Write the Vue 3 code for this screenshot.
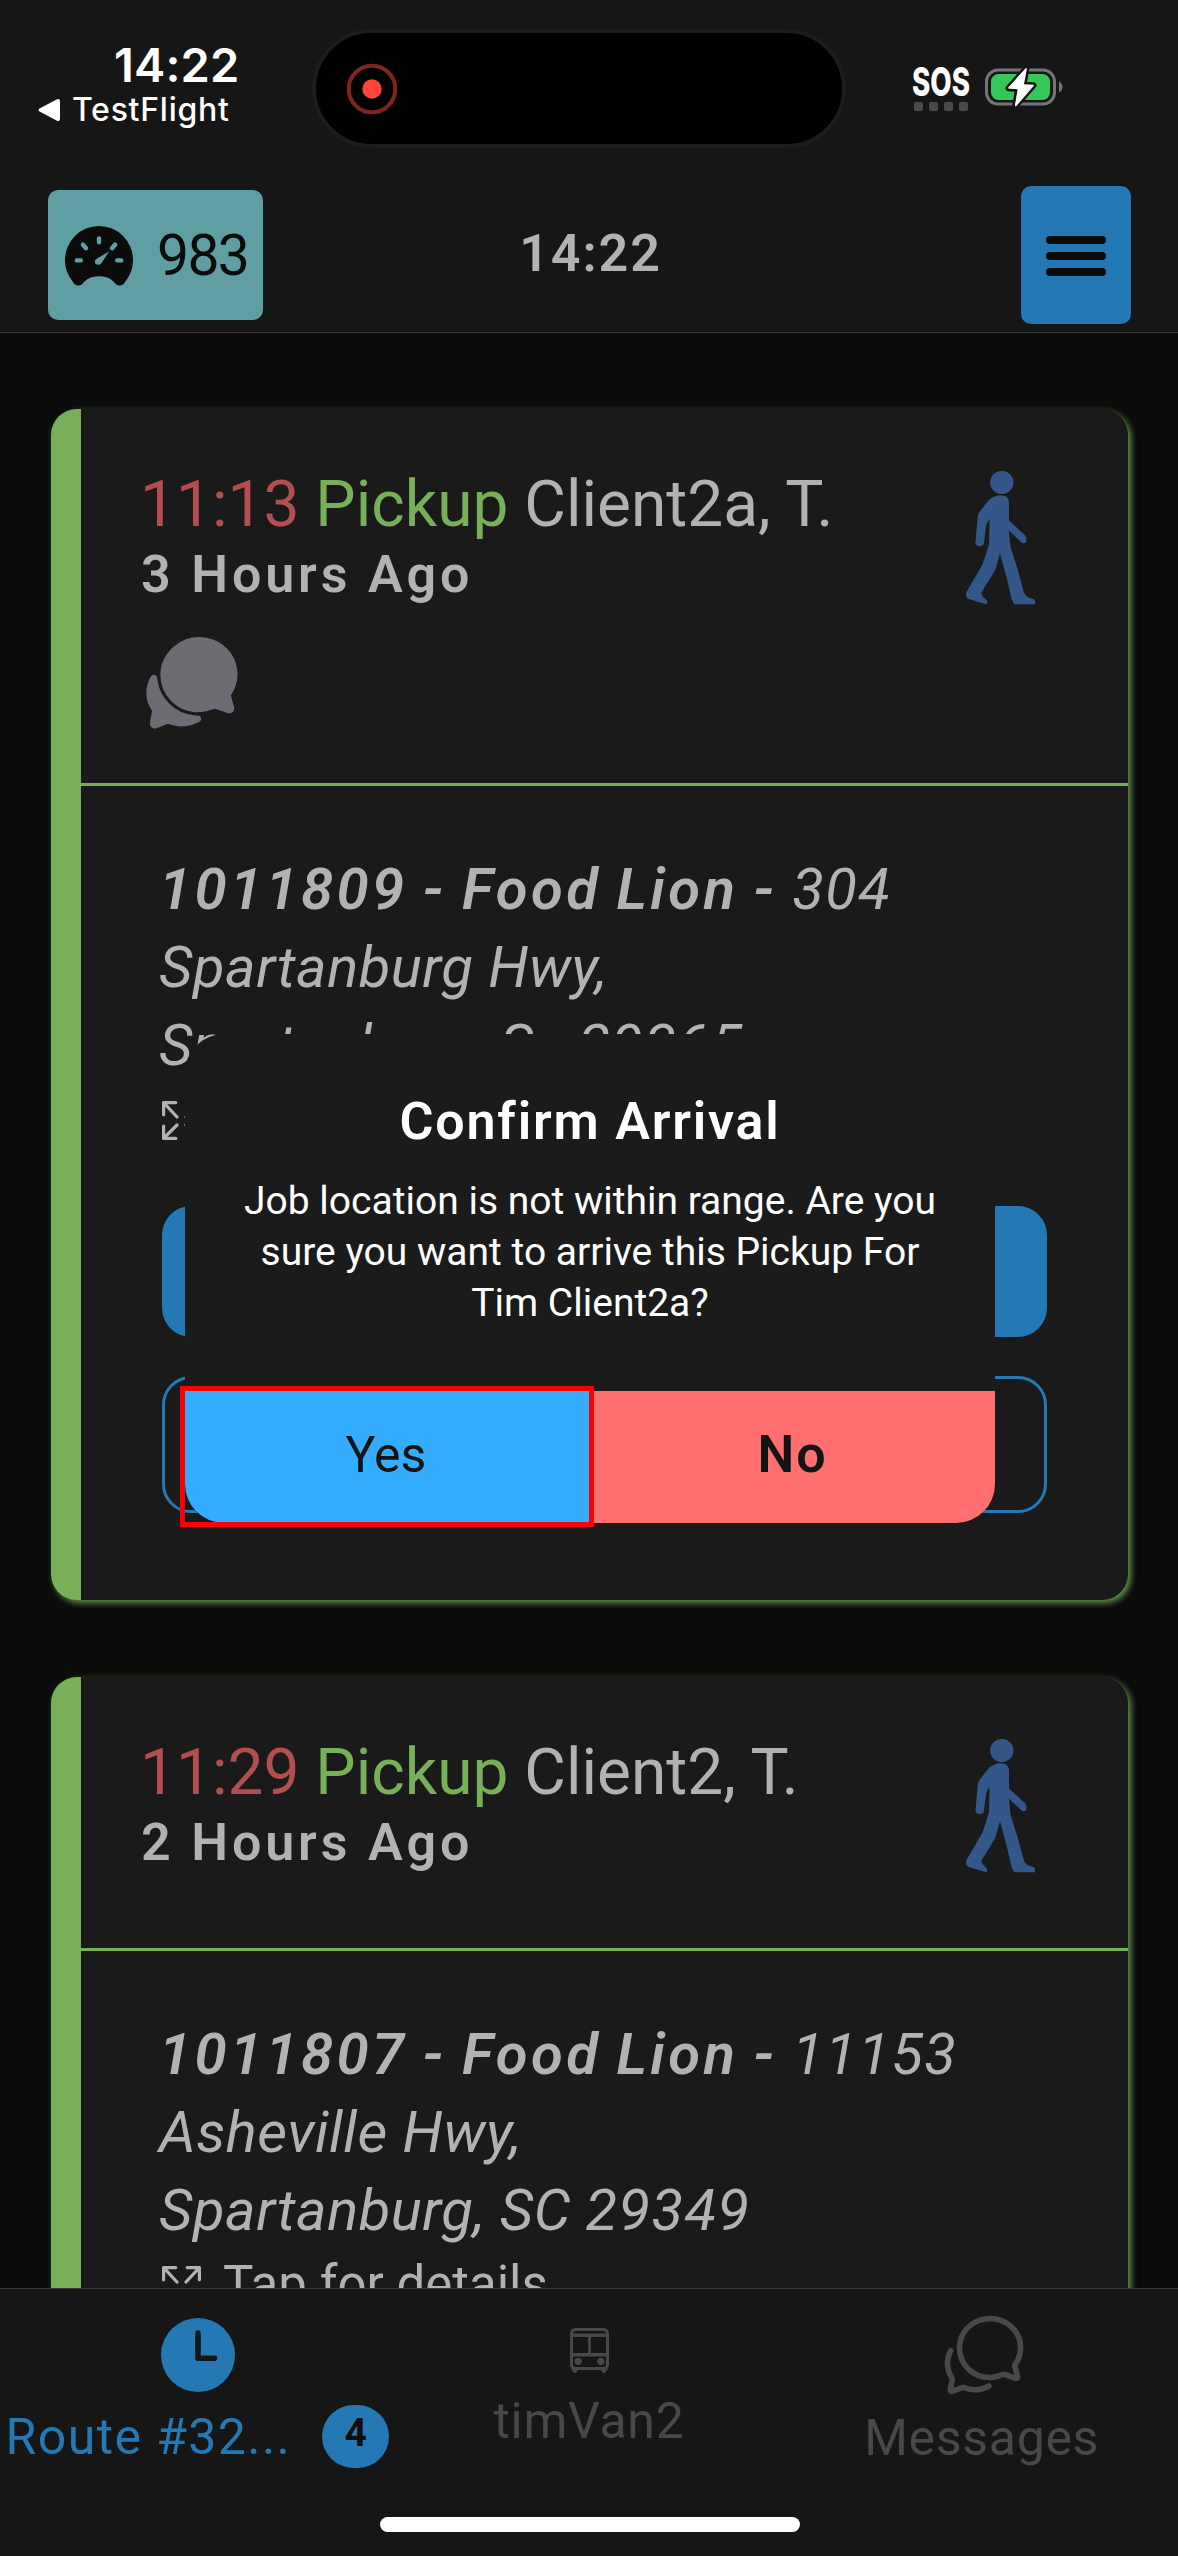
<script setup>
const jobs = [
  {
    time: '11:13',
    client: 'Client2a, T.',
    ago: '3 Hours Ago',
    site: '1011809 - Food Lion -',
    number: '304',
    street: 'Spartanburg Hwy,',
    city: 'Spartanburg, Sc',
    zip: '29365',
    hasMessages: true,
  },
  {
    time: '11:29',
    client: 'Client2, T.',
    ago: '2 Hours Ago',
    site: '1011807 - Food Lion -',
    number: '11153',
    street: 'Asheville Hwy,',
    city: 'Spartanburg, SC',
    zip: '29349',
    hasMessages: false,
  },
]
</script>

<template>
  <div class="screen">
    <header class="top">
      <div class="status">
        <div class="status-left">
          <div class="clock">14:22</div>
          <div class="back">
            <svg width="22" height="24" viewBox="0 0 22 24">
              <path d="M2 10.2 18.6 1.4Q22 0 22 3.2V20.8Q22 24 18.6 22.4L2 13.8Q-1 12 2 10.2Z" fill="#fff" />
            </svg>
            <span>TestFlight</span>
          </div>
        </div>
        <div class="island">
          <svg width="52" height="52" viewBox="0 0 52 52">
            <circle cx="26" cy="26" r="23.3" fill="none" stroke="#7f241f" stroke-width="4" />
            <circle cx="26" cy="26" r="9.7" fill="#ff453a" />
          </svg>
        </div>
        <div class="status-right">
          <div class="signal">
            <svg class="sos-box" width="60" height="30" viewBox="0 0 60 30">
              <text x="1" y="29" textLength="58" lengthAdjust="spacingAndGlyphs" class="sos">SOS</text>
            </svg>
            <div class="dots"><i></i><i></i><i></i><i></i></div>
          </div>
          <svg width="79" height="40" viewBox="0 0 79 40">
            <rect x="1.5" y="3" width="68" height="34" rx="11.5" fill="none" stroke="#767478" stroke-width="3" />
            <path d="M74 14.5Q77.5 16.5 77.5 20T74 25.5Z" fill="#767478" />
            <rect x="6" y="7" width="59" height="26" rx="7.5" fill="#34c759" />
            <path d="M41.5 1 23.5 21.3 33 22 30 39.5 48.5 18.3 38.5 17.6Z" fill="#fff" stroke="#161616" stroke-width="6" stroke-linejoin="round" paint-order="stroke" />
            <path d="M41 2 24 20.8 33.6 21.6 30.8 38.5 48 18.6 38 18Z" fill="#fff" stroke="#fff" stroke-width="1.6" stroke-linejoin="round" />
          </svg>
        </div>
      </div>
      <nav class="nav">
        <button class="odometer">
          <svg width="68" height="60" viewBox="0 0 68 60">
            <path d="M13.5 59.5C11 59.5 8.8 58 7.3 55A34 33.5 0 0 1 0 34A34 34 0 0 1 68 34A34 33.5 0 0 1 60.7 55C59.2 58 57 59.5 54.5 59.5C52 59.5 50.5 58 49 56C45 52 40 50.3 34 50.3S23 52 19 56C17.5 58 16 59.5 13.5 59.5Z" fill="#0b0b0b" />
            <path d="M11.8 34.4H15.8M34 12.5V16.2M18 18.7 21 22.2M50 18.7 47 22.2M52.2 34.4H56.2" stroke="#5f9ea3" stroke-width="4.4" stroke-linecap="round" />
            <path d="M44.2 25.2 31 33.2C28.5 36 30.5 39.3 33.8 38.8C35.3 38.6 36.2 37.8 37 36.3Z" fill="#5f9ea3" />
          </svg>
          <span>983</span>
        </button>
        <div class="nav-title">14:22</div>
        <button class="menu"><i></i><i></i><i></i></button>
      </nav>
    </header>

    <main class="list">
      <article v-for="job in jobs" :key="job.time" class="card">
        <div class="card-head" :class="{ tall: job.hasMessages }">
          <div>
            <h2><span class="due">{{ job.time }}</span> <span class="kind">Pickup</span> {{ job.client }}</h2>
            <h3>{{ job.ago }}</h3>
            <svg v-if="job.hasMessages" class="chat" width="104" height="104" viewBox="0 0 512 512" fill="#6c6d73">
              <path d="M439.9 405.6a26.77 26.77 0 01-9.59-2l-56.78-20.13-.42-.17a9.88 9.88 0 00-3.91-.76 10.32 10.32 0 00-3.62.66c-1.38.52-13.81 5.19-26.85 8.77-7.07 1.94-31.68 8.27-51.43 8.27-50.48 0-97.68-19.4-132.89-54.63A183.38 183.38 0 01100.3 215.1a175.9 175.9 0 014.06-37.58c8.79-40.62 32.07-77.57 65.55-104A194.76 194.76 0 01290.3 30c52.21 0 100.86 20 137 56.18 34.16 34.27 52.88 79.33 52.73 126.87a177.86 177.86 0 01-30.3 99.15l-.19.28-.74 1c-.17.23-.34.45-.5.68l-.15.27a21.63 21.63 0 00-1.08 2.09l15.74 55.94a26.42 26.42 0 011.12 7.11 24 24 0 01-24.03 26.03z" />
              <path d="M299.87 425.39a15.74 15.74 0 00-10.29-8.1c-5.78-1.53-12.52-1.27-17.67-1.65a201.78 201.78 0 01-128.82-58.75A199.21 199.21 0 0186.4 244.16C85 234.42 85 232 85 232a16 16 0 00-28-10.58s-7.88 8.58-11.6 17.19a162.09 162.09 0 0011 150.06C59 393 59 395 58.42 399.5c-2.73 14.11-7.51 39-10 51.91a24 24 0 008 22.92l.46.39A24.34 24.34 0 0072 480a23.42 23.42 0 009-1.79l53.51-20.65a8.05 8.05 0 015.72 0c21.07 7.84 43 12 63.78 12a176 176 0 0074.91-16.66c5.46-2.56 14-5.34 19-11.12a15 15 0 001.95-16.39z" />
            </svg>
          </div>
          <svg class="walker" width="69" height="134" viewBox="0 0 69 134" fill="#325788">
            <ellipse cx="35.8" cy="11.5" rx="11.6" ry="11.6" />
            <path d="M29 25.5Q34 23 39.5 25.2Q43 27 43 32V49.5L59.3 64.5Q61.3 68 60.2 71.3Q58 73.2 55.6 71.6L42.8 59.5L44.6 76 51.5 98 57.8 121Q59.5 125.5 63.5 127Q69 128 69 130V133.2H48.2L45.5 128 40.2 105 34 82.5 29 99.5 15.2 122Q16.3 126 20 128.6Q22.3 131 20.6 133.3L14 131.6 1.5 127.5Q-.8 124.5 .2 121.5L16.5 93.5 23 73.5 23.6 47.7 20.2 54 17.8 72.5Q16.8 75.6 13.2 75.2Q9.3 74.5 9.5 71.5L11.6 46Q12 43 13.5 41L23.3 28.5Q25.8 26.3 29 25.5Z" />
          </svg>
        </div>
        <div class="card-body">
          <address>
            <strong>{{ job.site }}</strong> <span class="num">{{ job.number }}</span><br />
            {{ job.street }}<br />
            {{ job.city }} <span class="num">{{ job.zip }}</span>
          </address>
          <div class="details">
            <svg width="39" height="39" viewBox="0 0 39 39" fill="none" stroke="#b2b2b2" stroke-width="3.2" stroke-linecap="round" stroke-linejoin="round">
              <path d="M13.8 1.6H1.6V13.8M1.6 1.6 15 16M25.2 1.6H37.4V13.8M37.4 1.6 24 16M13.8 37.4H1.6V25.2M1.6 37.4 15 24M25.2 37.4H37.4V25.2M37.4 37.4 24 24" />
            </svg>
            <span>Tap for details</span>
          </div>
          <button class="action solid"></button>
          <button class="action outline"></button>
        </div>
      </article>
    </main>

    <footer class="tabs">
      <div class="tab active">
        <svg width="74" height="74" viewBox="0 0 74 74">
          <circle cx="37" cy="37" r="37" fill="#2479b4" />
          <path d="M37 15V40.2H53.5" fill="none" stroke="#161616" stroke-width="5.6" stroke-linecap="round" stroke-linejoin="round" />
        </svg>
        <div class="route">
          <span>Route #32...</span>
          <b>4</b>
        </div>
      </div>
      <div class="tab">
        <svg class="bus" width="39" height="45" viewBox="0 0 39 45" fill="none" stroke="#484848">
          <rect x="1.5" y="1.5" width="36" height="39" rx="4" stroke-width="3" />
          <path d="M2 7.3H37M2 26.8H37" stroke-width="3.4" />
          <path d="M19.5 8V26" stroke-width="2.6" />
          <path d="M5 40V42.5M34 40V42.5" stroke-width="7" />
          <path d="M5 43V43.1M34 43V43.1" stroke-width="4" stroke-linecap="round" />
          <g fill="#484848" stroke="none"><circle cx="8.2" cy="33.3" r="3.6" /><circle cx="30.8" cy="33.3" r="3.6" /></g>
        </svg>
        <span>timVan2</span>
      </div>
      <div class="tab">
        <svg class="messages" width="90" height="90" viewBox="0 0 512 512" fill="none" stroke="#484848" stroke-width="32" stroke-linecap="round">
          <path d="M431 320.6c-1-3.6 1.2-8.6 3.3-12.2a33.68 33.68 0 012.1-3.1A162 162 0 00464 215c.3-92.2-77.5-167-173.7-167-83.9 0-153.9 57.1-170.3 132.9a160.7 160.7 0 00-3.7 34.2c0 92.3 74.8 169.1 171 169.1 15.3 0 35.9-4.6 47.2-7.7s22.5-7.2 25.4-8.3a26.44 26.44 0 019.3-1.7 26 26 0 0110.1 2l56.7 20.1a13.52 13.52 0 003.9 1 8 8 0 008-8 12.85 12.85 0 00-.5-2.7z" />
          <path d="M66.46 232a146.23 146.23 0 006.39 152.67c2.31 3.49 3.61 6.19 3.21 8s-11.93 61.87-11.93 61.87a8 8 0 002.71 7.68A8.17 8.17 0 0072 464a7.26 7.26 0 002.91-.6l56.21-22a15.7 15.7 0 0112 .2c18.94 7.38 39.88 12 60.83 12A159.21 159.21 0 00284 432.11" />
        </svg>
        <span>Messages</span>
      </div>
      <div class="home-bar"></div>
    </footer>

    <div class="dialog" role="alertdialog">
      <h4>Confirm Arrival</h4>
      <p>Job location is not within range. Are you<br />sure you want to arrive this Pickup For<br />Tim Client2a?</p>
      <div class="choices">
        <button class="yes">Yes</button>
        <button class="no">No</button>
      </div>
      <div class="focus-ring"></div>
    </div>
  </div>
</template>

<style>
body {
  margin: 0;
  background: #0b0b0b;
}
</style>

<style scoped>
.screen {
  position: relative;
  display: flex;
  flex-direction: column;
  width: 1178px;
  height: 2556px;
  overflow: hidden;
  background: #0b0b0b;
  color: #b2b2b2;
  font-family: "Roboto", sans-serif;
}
button {
  margin: 0;
  padding: 0;
  border: 0;
  font-family: inherit;
  color: #0b0b0b;
}
svg {
  display: block;
  flex: none;
}
h2, h3, h4, p {
  margin: 0;
}

.top {
  flex: none;
  box-sizing: border-box;
  height: 333px;
  background: #161616;
  border-bottom: 1px solid #3a3a3a;
}
.status {
  display: grid;
  grid-template-columns: 312px 534px 1fr;
  height: 178px;
  color: #fff;
  font-family: "Inter", sans-serif;
}
.status-left {
  padding-top: 42px;
}
.clock {
  margin-left: 114px;
  font-size: 47px;
  line-height: 46px;
  font-weight: 600;
  letter-spacing: 0.15px;
}
.back {
  display: flex;
  align-items: center;
  gap: 12px;
  margin: 2px 0 0 38px;
  font-size: 32px;
  line-height: 40px;
  font-weight: 500;
  letter-spacing: 0.73px;
}
.island {
  box-sizing: border-box;
  display: flex;
  align-items: center;
  height: 119px;
  margin-top: 29px;
  padding-left: 30px;
  border: 4px solid #1c1c1c;
  border-radius: 60px;
  background: #000;
}
.status-right {
  display: flex;
  align-items: flex-start;
  gap: 14px;
  padding: 67px 0 0 65px;
}
.sos-box {
  overflow: visible;
}
.sos {
  font: 800 39px "Inter", sans-serif;
  fill: #fff;
}
.dots {
  display: flex;
  gap: 6px;
  margin: 5px 0 0 3px;
}
.dots i {
  width: 9px;
  height: 9px;
  border-radius: 2px;
  background: #4a4a4a;
}
.nav {
  display: grid;
  grid-template-columns: 1fr auto 1fr;
  align-items: center;
  height: 154px;
  padding: 0 47px 0 48px;
}
.odometer {
  display: flex;
  align-items: center;
  gap: 24px;
  width: 215px;
  height: 130px;
  padding-left: 17px;
  border-radius: 10px;
  background: #5f9ea3;
  font-size: 57px;
  font-weight: 400;
  letter-spacing: -1.6px;
}
.odometer svg {
  margin-top: 2px;
}
.nav-title {
  padding-left: 2px;
  font-size: 52px;
  line-height: 60px;
  font-weight: 600;
  letter-spacing: 1.9px;
  margin-top: -3px;
}
.menu {
  display: flex;
  flex-direction: column;
  align-items: center;
  justify-content: center;
  gap: 8px;
  width: 110px;
  height: 138px;
  padding-top: 2px;
  border-radius: 10px;
  background: #2479b4;
  justify-self: end;
}
.menu i {
  width: 60px;
  height: 8px;
  border-radius: 4px;
  background: #0b0b0b;
}

.list {
  flex: 1;
  min-height: 0;
  overflow: hidden;
  display: flex;
  flex-direction: column;
  gap: 77px;
  padding: 76px 50px 0 51px;
}
.card {
  flex: none;
  border-left: 30px solid #77b058;
  border-radius: 26px;
  background: #1a1a1a;
  box-shadow: 3px 3px 6px rgba(119, 176, 88, 0.8), 0 0 16px rgba(119, 176, 88, 0.06);
}
.card-head {
  box-sizing: border-box;
  display: flex;
  justify-content: space-between;
  height: 274px;
  padding: 58px 93px 0 62px;
  border-bottom: 3px solid #77b058;
}
.card-head.tall {
  height: 377px;
}
h2 {
  margin-left: -3px;
  font-size: 64px;
  line-height: 76px;
  font-weight: 400;
}
.due {
  color: #b24e4f;
}
.kind {
  color: #77b058;
}
h3 {
  margin: 1px 0 0 -2px;
  font-size: 52px;
  line-height: 62px;
  font-weight: 600;
  letter-spacing: 3.84px;
}
.chat {
  margin: 25px 0 0 -3px;
}
.walker {
  margin-top: 4px;
}
.card-body {
  display: flex;
  flex-direction: column;
  padding: 64px 81px 87px;
}
address {
  margin-left: -3px;
  font-size: 58px;
  line-height: 78px;
  font-style: italic;
  letter-spacing: 0.5px;
  white-space: nowrap;
}
address strong {
  font-weight: 600;
  letter-spacing: 3.4px;
  word-spacing: -2.5px;
}
.num {
  letter-spacing: 1.4px;
}
.details {
  display: flex;
  align-items: center;
  gap: 22px;
  margin-top: 5px;
  font-size: 51px;
  line-height: 62px;
}
.action {
  border-radius: 29px;
}
.solid {
  height: 131px;
  margin-top: 55px;
  background: #2479b4;
}
.outline {
  box-sizing: border-box;
  height: 137px;
  margin-top: 39px;
  border: 3px solid #2479b4;
  background: transparent;
}

.tabs {
  position: relative;
  flex: none;
  box-sizing: border-box;
  display: grid;
  grid-template-columns: repeat(3, 1fr);
  height: 268px;
  border-top: 1px solid #3a3a3a;
  background: #161616;
}
.tab {
  display: flex;
  flex-direction: column;
  align-items: center;
  padding-top: 29px;
  color: #484848;
  font-size: 50px;
  line-height: 62px;
  letter-spacing: 0.7px;
}
.active {
  color: #2479b4;
}
.active > svg {
  margin-left: 4px;
}
.route {
  display: flex;
  align-items: center;
  gap: 31px;
  margin: 13px 0 0 2px;
  letter-spacing: 1.4px;
}
.route b {
  width: 67px;
  height: 63px;
  border-radius: 32px;
  background: #2479b4;
  color: #0e0e0e;
  font-size: 39px;
  line-height: 57px;
  font-weight: 700;
  text-align: center;
  letter-spacing: 0;
}
.bus {
  margin: 10px 0 17px 1px;
}
.messages {
  margin: -8px 0 7px 4px;
}
.home-bar {
  position: absolute;
  left: 380px;
  bottom: 24px;
  width: 420px;
  height: 15px;
  border-radius: 8px;
  background: #fff;
}

.dialog {
  position: absolute;
  left: 185px;
  top: 1034px;
  width: 810px;
  height: 489px;
  border-radius: 39px;
  background: #1b1b1b;
  color: #fff;
  text-align: center;
}
h4 {
  padding-top: 57px;
  font-size: 52px;
  line-height: 62px;
  font-weight: 600;
  letter-spacing: 1.8px;
}
.dialog p {
  margin-top: 23px;
  font-size: 39px;
  line-height: 51px;
}
.choices {
  display: grid;
  grid-template-columns: 1fr 1fr;
  height: 132px;
  margin-top: 62px;
  overflow: hidden;
  border-radius: 0 0 39px 39px;
}
.choices button {
  padding: 0 3px 4px 0;
  color: #141414;
  font-size: 50px;
  line-height: 60px;
}
.yes {
  background: #34acff;
}
.choices .no {
  padding-right: 0;
  background: #ff6f6f;
  font-size: 52px;
  font-weight: 600;
  letter-spacing: 2px;
}
.focus-ring {
  position: absolute;
  left: -5px;
  top: 352px;
  box-sizing: border-box;
  width: 414px;
  height: 141px;
  border: 5px solid #fb0007;
}
</style>
